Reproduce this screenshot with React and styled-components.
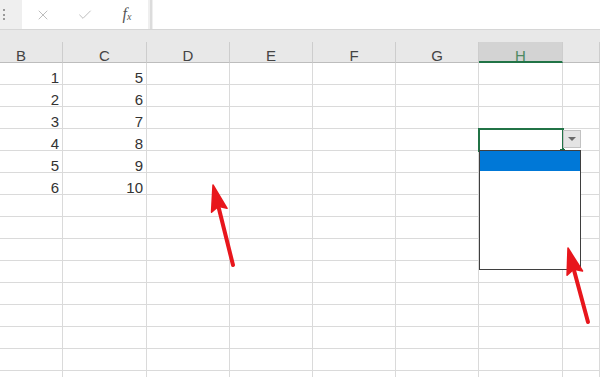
import React from 'react'
import styled, { createGlobalStyle } from 'styled-components'
import { X, Check } from 'lucide-react'

const GlobalStyle = createGlobalStyle`
  html, body {
    margin: 0;
    padding: 0;
    background: #ffffff;
  }
  body {
    font-family: "Liberation Sans", Arial, sans-serif;
  }
`

const COLUMNS = '63px 84px 83px 83px 83px 83px 84px 1fr'
const GREEN = '#217346'

const Sheet = styled.div`
  position: relative;
  width: 600px;
  height: 377px;
  overflow: hidden;
  background: #ffffff;
`

const FormulaBar = styled.div`
  display: flex;
  height: 30px;
  background: #efefef;
  border-bottom: 1px solid #d6d6d6;
  box-sizing: border-box;
`

const Grip = styled.div`
  width: 22px;
  display: flex;
  padding: 9px 0 0 3px;
  box-sizing: border-box;

  span {
    height: 11px;
    border-left: 2px dotted #9a9a9a;
  }
`

const FxBox = styled.div`
  width: 126px;
  display: flex;
  align-items: center;
  background: #ffffff;
`

const FxButton = styled.div`
  width: 42px;
  height: 100%;
  display: flex;
  align-items: center;
  justify-content: center;
  color: ${p => (p.$dark ? '#555555' : '#b8b8b8')};
`

const FxLabel = styled.span`
  font-family: "Liberation Serif", "Times New Roman", serif;
  font-style: italic;
  font-size: 16px;
  color: #555555;
  margin-top: -1px;

  sub {
    font-size: 10px;
    vertical-align: -1px;
  }
`

const Divider = styled.div`
  width: 5px;
  display: flex;
  justify-content: center;

  span {
    width: 2px;
    background: #dcdcdc;
  }
`

const FormulaInput = styled.div`
  flex: 1;
  background: #ffffff;
`

const Band = styled.div`
  height: 12px;
  background: #e8e8e8;
`

const HeaderRow = styled.div`
  display: grid;
  grid-template-columns: ${COLUMNS};
  height: 21px;
  background: #e8e8e8;
`

const HeaderCell = styled.div`
  box-sizing: border-box;
  height: 21px;
  padding: 6px ${p => (p.$first ? '20px' : '0')} 0 0;
  line-height: 15px;
  font-size: 15px;
  text-align: center;
  color: ${p => (p.$active ? '#4e8a63' : '#444444')};
  background: ${p => (p.$active ? '#d3d3d3' : 'transparent')};
  border-right: 1px solid #cdcdcd;
  border-bottom: ${p => (p.$active ? `2px solid ${GREEN}` : '1px solid #bdbdbd')};
`

const Row = styled.div`
  display: grid;
  grid-template-columns: ${COLUMNS};
  height: 22px;
`

const Cell = styled.div`
  position: relative;
  box-sizing: border-box;
  height: 22px;
  padding: 7px 3px 0 0;
  line-height: 15px;
  font-size: 15px;
  text-align: right;
  color: #333333;
  border-right: 1px solid #dadada;
  border-bottom: 1px solid #dadada;
`

const Selection = styled.div`
  position: absolute;
  top: -1px;
  left: -1px;
  width: 86px;
  height: 24px;
  box-sizing: border-box;
  border: 2px solid ${GREEN};
  z-index: 2;

  &::after {
    content: '';
    position: absolute;
    right: -3px;
    bottom: -3px;
    width: 5px;
    height: 4px;
    background: ${GREEN};
  }
`

const DropButton = styled.div`
  position: absolute;
  top: 1px;
  left: calc(100% + 1px);
  width: 18px;
  height: 18px;
  box-sizing: border-box;
  background: #e4e4e4;
  border: 1px solid #c2c2c2;
  display: flex;
  align-items: center;
  justify-content: center;
  z-index: 3;

  span {
    width: 0;
    height: 0;
    border-left: 4px solid transparent;
    border-right: 4px solid transparent;
    border-top: 4px solid #6a6a6a;
  }
`

const DropList = styled.div`
  position: absolute;
  top: 100%;
  left: 0;
  width: 102px;
  height: 120px;
  box-sizing: border-box;
  background: #ffffff;
  border: 1px solid #3f3f3f;
  z-index: 3;
`

const ListItem = styled.div`
  height: 20px;
  background: ${p => (p.$selected ? '#0078d7' : '#ffffff')};
`

const Arrows = styled.svg`
  position: absolute;
  top: 0;
  left: 0;
  z-index: 5;
  pointer-events: none;
`

const letters = ['B', 'C', 'D', 'E', 'F', 'G', 'H', '']
const rows = Array.from({ length: 15 }, (_, i) => (i < 6 ? [i + 1, i + 5] : []))

function Arrow({ tail, tip }) {
  const dx = tip[0] - tail[0]
  const dy = tip[1] - tail[1]
  const len = Math.hypot(dx, dy)
  const ux = dx / len
  const uy = dy / len
  const head = 26
  const half = 8
  const bx = tip[0] - ux * head
  const by = tip[1] - uy * head
  const pts = [
    [tip[0], tip[1]],
    [bx - uy * half, by + ux * half],
    [bx + ux * 4, by + uy * 4],
    [bx + uy * half, by - ux * half],
  ]
    .map(p => p.join(','))
    .join(' ')
  return (
    <g fill="#e8161c" stroke="#e8161c" filter="url(#soft)">
      <line x1={tail[0]} y1={tail[1]} x2={bx + ux * 4} y2={by + uy * 4} strokeWidth="4" strokeLinecap="round" />
      <polygon points={pts} strokeWidth="1.5" strokeLinejoin="round" />
    </g>
  )
}

export default function App() {
  return (
    <>
      <GlobalStyle />
      <Sheet>
        <FormulaBar>
          <Grip><span /></Grip>
          <FxBox>
            <FxButton><X size={16} strokeWidth={1.4} /></FxButton>
            <FxButton><Check size={16} strokeWidth={1.4} /></FxButton>
            <FxButton $dark><FxLabel>f<sub>x</sub></FxLabel></FxButton>
          </FxBox>
          <Divider><span /></Divider>
          <FormulaInput />
        </FormulaBar>
        <Band />
        <HeaderRow>
          {letters.map((l, i) => (
            <HeaderCell key={i} $first={i === 0} $active={l === 'H'}>{l}</HeaderCell>
          ))}
        </HeaderRow>
        {rows.map((vals, r) => (
          <Row key={r}>
            {letters.map((l, c) => (
              <Cell key={c}>
                {c < 2 ? vals[c] : null}
                {r === 3 && l === 'H' && (
                  <>
                    <Selection />
                    <DropButton><span /></DropButton>
                    <DropList>
                      <ListItem $selected />
                    </DropList>
                  </>
                )}
              </Cell>
            ))}
          </Row>
        ))}
        <Arrows width="600" height="377" viewBox="0 0 600 377">
          <defs>
            <filter id="soft" x="-20%" y="-20%" width="140%" height="140%">
              <feGaussianBlur stdDeviation="0.6" />
            </filter>
          </defs>
          <Arrow tail={[233, 265]} tip={[213, 185]} />
          <Arrow tail={[588, 322]} tip={[568, 248]} />
        </Arrows>
      </Sheet>
    </>
  )
}
